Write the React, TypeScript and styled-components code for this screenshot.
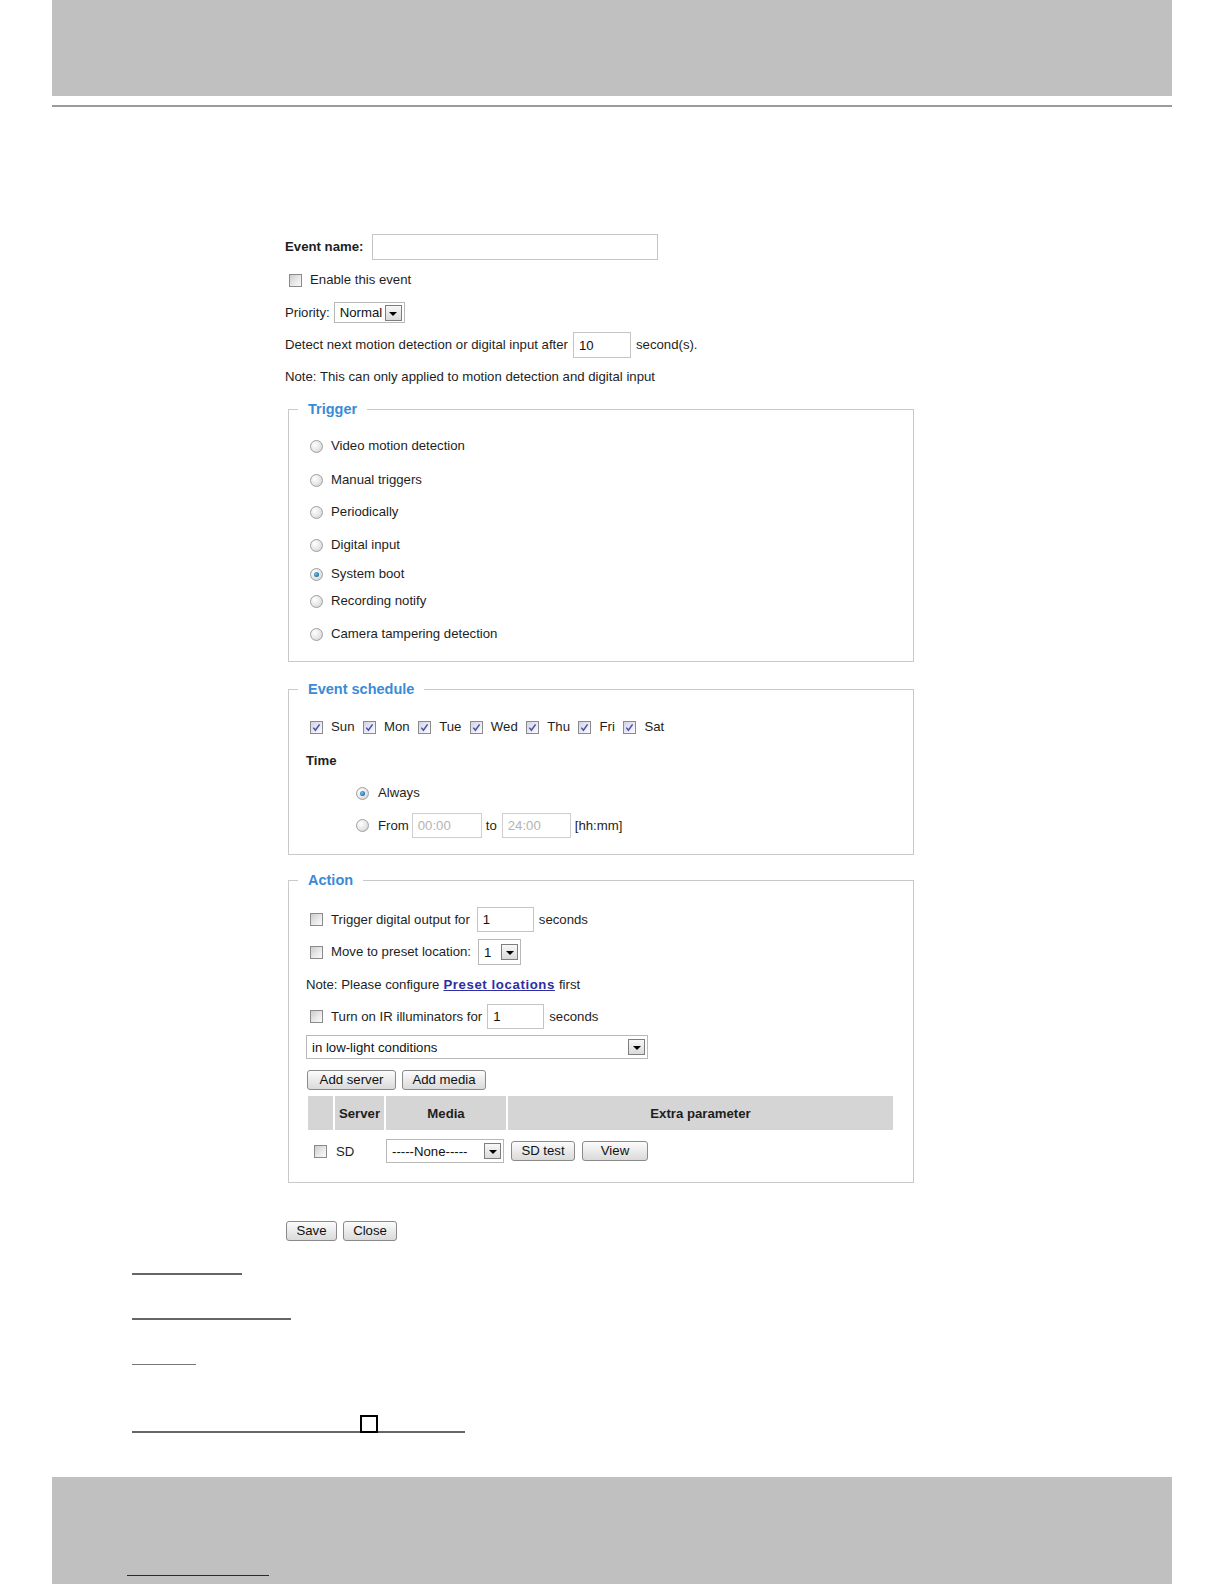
import React from "react";
import styled, { createGlobalStyle } from "styled-components";

const GlobalStyle = createGlobalStyle`
  html, body { margin: 0; padding: 0; background: #fff; }
  body {
    font-family: "Liberation Sans", Arial, sans-serif;
    font-size: 13.2px;
    color: #1e1e1e;
  }
  * { box-sizing: border-box; }
`;

const Page = styled.div`
  width: 1224px;
  height: 1584px;
  display: flex;
  flex-direction: column;
  overflow: hidden;
`;

const HeaderBand = styled.div`
  flex: none;
  margin: 0 52px;
  height: 96px;
  background: #c0c0c0;
`;

const HeaderRule = styled.div`
  flex: none;
  margin: 9px 52px 0;
  height: 2px;
  background: #9b9b9b;
`;

const Form = styled.div`
  margin: 127px 0 0 285px;
  width: 640px;
  display: flex;
  flex-direction: column;
`;

const Row = styled.div<{ $mt?: number; $h?: number; $indent?: number }>`
  display: flex;
  align-items: center;
  white-space: nowrap;
  margin-top: ${(p) => p.$mt ?? 0}px;
  height: ${(p) => p.$h ?? 20}px;
  padding-left: ${(p) => p.$indent ?? 0}px;
`;

const Text = styled.span<{ $ml?: number; $bold?: boolean }>`
  margin-left: ${(p) => p.$ml ?? 0}px;
  font-weight: ${(p) => (p.$bold ? "bold" : "normal")};
  line-height: 16px;
`;

const Link = styled.a`
  margin: 0 4px;
  color: #2e2ea3;
  font-weight: bold;
  letter-spacing: 0.6px;
  text-decoration: underline;
  cursor: pointer;
`;

const Group = styled.fieldset<{ $mt: number; $pb: number }>`
  margin: ${(p) => p.$mt}px 0 0 3px;
  width: 626px;
  min-width: 0;
  border: 1px solid #c9c9c9;
  padding: 0 18px ${(p) => p.$pb}px 17px;
  display: flex;
  flex-direction: column;
`;

const Legend = styled.legend`
  margin-left: -8px;
  padding: 0 10px;
  font-size: 14.5px;
  line-height: 18px;
  font-weight: bold;
  color: #3a8bd6;
`;

const CheckBox = styled.span<{ $ml?: number; $on?: boolean }>`
  flex: none;
  width: 13px;
  height: 13px;
  margin-left: ${(p) => p.$ml ?? 4}px;
  border: 1px solid #8a8a8a;
  background: ${(p) =>
    p.$on
      ? "linear-gradient(135deg, #d2d2e4 0%, #ececf7 60%, #fafaff 100%)"
      : "linear-gradient(135deg, #cdcdcd 0%, #ebebeb 60%, #fafafa 100%)"};
  display: inline-flex;
  align-items: center;
  justify-content: center;
`;

const RadioDot = styled.span<{ $ml?: number; $on?: boolean }>`
  flex: none;
  width: 13px;
  height: 13px;
  margin-left: ${(p) => p.$ml ?? 4}px;
  border-radius: 50%;
  border: 1px solid #a0a0a0;
  background: radial-gradient(circle at 35% 35%, #ffffff 0%, #e6e6e6 55%, #c8c8c8 100%);
  display: inline-flex;
  align-items: center;
  justify-content: center;
  &::after {
    content: "";
    display: ${(p) => (p.$on ? "block" : "none")};
    width: 5px;
    height: 5px;
    border-radius: 50%;
    background: radial-gradient(circle at 40% 40%, #7fc4ee 0%, #2a78b0 60%, #174f7c 100%);
  }
`;

const Field = styled.span<{ $w: number; $h: number; $ml?: number; $off?: boolean }>`
  flex: none;
  display: inline-flex;
  align-items: center;
  width: ${(p) => p.$w}px;
  height: ${(p) => p.$h}px;
  margin-left: ${(p) => p.$ml ?? 0}px;
  padding-left: 5px;
  border: 1px solid ${(p) => (p.$off ? "#cfcfcf" : "#c4c4c4")};
  background: #fff;
  color: ${(p) => (p.$off ? "#b4b4b4" : "#111")};
`;

const Select = styled.span<{ $w: number; $h: number; $ml?: number }>`
  flex: none;
  display: inline-flex;
  align-items: center;
  justify-content: space-between;
  width: ${(p) => p.$w}px;
  height: ${(p) => p.$h}px;
  margin-left: ${(p) => p.$ml ?? 0}px;
  padding: 0 2px 0 5px;
  border: 1px solid #b8b8b8;
  background: #fff;
  color: #111;
`;

const DropBtn = styled.span`
  flex: none;
  width: 17px;
  height: 16px;
  border: 1px solid #7e7e7e;
  background: linear-gradient(#f8f8f8, #dadada);
  display: inline-flex;
  align-items: center;
  justify-content: center;
  &::after {
    content: "";
    margin-top: 2px;
    border-left: 4px solid transparent;
    border-right: 4px solid transparent;
    border-top: 4px solid #000;
  }
`;

const Button = styled.button<{ $w: number; $ml?: number }>`
  flex: none;
  width: ${(p) => p.$w}px;
  height: 20px;
  margin: 0 0 0 ${(p) => p.$ml ?? 0}px;
  padding: 0;
  border: 1px solid #8a8a8a;
  border-radius: 3px;
  background: linear-gradient(#fcfcfc 0%, #ececec 45%, #dadada 100%);
  font-family: inherit;
  font-size: 13.2px;
  color: #111;
  line-height: 18px;
`;

const Table = styled.table`
  margin-top: 4px;
  width: 589px;
  border-collapse: separate;
  border-spacing: 2px;
`;

const Th = styled.th<{ $w: number }>`
  width: ${(p) => p.$w}px;
  height: 34px;
  padding: 0;
  background: #d5d5d5;
  font-weight: bold;
  font-size: 13.2px;
  text-align: center;
  white-space: nowrap;
`;

const Td = styled.td`
  height: 38px;
  padding: 0;
  vertical-align: middle;
  white-space: nowrap;
`;

const Cell = styled.div<{ $center?: boolean; $pl?: number }>`
  display: flex;
  align-items: center;
  justify-content: ${(p) => (p.$center ? "center" : "flex-start")};
  padding-left: ${(p) => p.$pl ?? 0}px;
`;

const Notes = styled.div`
  margin: 32px 0 0 132px;
  display: flex;
  flex-direction: column;
`;

const Rule = styled.div<{ $w: number; $t: number; $mt: number; $c?: string }>`
  width: ${(p) => p.$w}px;
  height: ${(p) => p.$t}px;
  margin-top: ${(p) => p.$mt}px;
  background: ${(p) => p.$c ?? "#666"};
`;

const BoxedRule = styled.div`
  margin-top: 50px;
  width: 333px;
  height: 18px;
  display: flex;
  align-items: flex-end;
`;

const Segment = styled.div<{ $w?: number }>`
  height: 2px;
  background: #666;
  flex: ${(p) => (p.$w ? "none" : "1")};
  width: ${(p) => (p.$w ? `${p.$w}px` : "auto")};
`;

const Square = styled.div`
  flex: none;
  width: 18px;
  height: 18px;
  border: 2px solid #000;
`;

const FooterBand = styled.div`
  flex: none;
  margin: auto 52px 0;
  height: 107px;
  background: #c0c0c0;
  padding: 98px 0 0 75px;
`;

const FooterLink = styled.div`
  width: 142px;
  height: 1px;
  background: #1414d8;
`;

const Check = () => (
  <svg width="9" height="9" viewBox="0 0 9 9">
    <path d="M1.3 4.6 L3.4 7.2 L7.6 1.4" stroke="#4a4ea6" strokeWidth="1.5" fill="none" />
  </svg>
);

const triggers: { label: string; mt: number; on?: boolean }[] = [
  { label: "Video motion detection", mt: 18 },
  { label: "Manual triggers", mt: 14 },
  { label: "Periodically", mt: 12 },
  { label: "Digital input", mt: 13 },
  { label: "System boot", mt: 9, on: true },
  { label: "Recording notify", mt: 7 },
  { label: "Camera tampering detection", mt: 13 },
];

const days = ["Sun", "Mon", "Tue", "Wed", "Thu", "Fri", "Sat"];

export default function App() {
  return (
    <Page>
      <GlobalStyle />
      <HeaderBand />
      <HeaderRule />

      <Form>
        <Row $h={26}>
          <Text $bold>Event name:</Text>
          <Field $w={286} $h={26} $ml={9} />
        </Row>
        <Row $mt={10} $h={20}>
          <CheckBox />
          <Text $ml={8}>Enable this event</Text>
        </Row>
        <Row $mt={12} $h={21}>
          <Text>Priority:</Text>
          <Select $w={71} $h={21} $ml={4}>
            Normal
            <DropBtn />
          </Select>
        </Row>
        <Row $mt={9} $h={26}>
          <Text>Detect next motion detection or digital input after</Text>
          <Field $w={58} $h={26} $ml={5}>10</Field>
          <Text $ml={5}>second(s).</Text>
        </Row>
        <Row $mt={11} $h={16}>
          <Text>Note: This can only applied to motion detection and digital input</Text>
        </Row>

        <Group $mt={15} $pb={17}>
          <Legend>Trigger</Legend>
          {triggers.map((t) => (
            <Row key={t.label} $mt={t.mt} $h={20}>
              <RadioDot $on={t.on} />
              <Text $ml={8}>{t.label}</Text>
            </Row>
          ))}
        </Group>

        <Group $mt={18} $pb={16}>
          <Legend>Event schedule</Legend>
          <Row $mt={19} $h={20}>
            {days.map((d, i) => (
              <React.Fragment key={d}>
                <CheckBox $on $ml={i === 0 ? 4 : 8.5}>
                  <Check />
                </CheckBox>
                <Text $ml={8}>{d}</Text>
              </React.Fragment>
            ))}
          </Row>
          <Row $mt={14} $h={20}>
            <Text $bold>Time</Text>
          </Row>
          <Row $mt={12} $h={20} $indent={46}>
            <RadioDot $on />
            <Text $ml={9}>Always</Text>
          </Row>
          <Row $mt={10} $h={25} $indent={46}>
            <RadioDot />
            <Text $ml={9}>From</Text>
            <Field $w={70} $h={25} $ml={3} $off>
              00:00
            </Field>
            <Text $ml={4}>to</Text>
            <Field $w={69} $h={25} $ml={5} $off>
              24:00
            </Field>
            <Text $ml={4}>[hh:mm]</Text>
          </Row>
        </Group>

        <Group $mt={16} $pb={10}>
          <Legend>Action</Legend>
          <Row $mt={18} $h={25}>
            <CheckBox />
            <Text $ml={8}>Trigger digital output for</Text>
            <Field $w={57} $h={25} $ml={7}>1</Field>
            <Text $ml={5}>seconds</Text>
          </Row>
          <Row $mt={7} $h={26}>
            <CheckBox />
            <Text $ml={8}>Move to preset location:</Text>
            <Select $w={43} $h={26} $ml={7}>
              1
              <DropBtn />
            </Select>
          </Row>
          <Row $mt={12} $h={16}>
            <Text>
              Note: Please configure<Link>Preset locations</Link>first
            </Text>
          </Row>
          <Row $mt={11} $h={25}>
            <CheckBox />
            <Text $ml={8}>Turn on IR illuminators for</Text>
            <Field $w={57} $h={25} $ml={5}>1</Field>
            <Text $ml={5}>seconds</Text>
          </Row>
          <Row $mt={6} $h={24}>
            <Select $w={342} $h={24}>
              in low-light conditions
              <DropBtn />
            </Select>
          </Row>
          <Row $mt={11} $h={20}>
            <Button $w={89} $ml={1}>Add server</Button>
            <Button $w={84} $ml={6}>Add media</Button>
          </Row>
          <Table>
            <thead>
              <tr>
                <Th $w={25} />
                <Th $w={49}>Server</Th>
                <Th $w={120}>Media</Th>
                <Th $w={385}>Extra parameter</Th>
              </tr>
            </thead>
            <tbody>
              <tr>
                <Td>
                  <Cell $center>
                    <CheckBox $ml={0} />
                  </Cell>
                </Td>
                <Td>
                  <Cell $pl={1}>SD</Cell>
                </Td>
                <Td>
                  <Cell>
                    <Select $w={118} $h={24}>
                      -----None-----
                      <DropBtn />
                    </Select>
                  </Cell>
                </Td>
                <Td>
                  <Cell>
                    <Button $w={64} $ml={3}>SD test</Button>
                    <Button $w={66} $ml={7}>View</Button>
                  </Cell>
                </Td>
              </tr>
            </tbody>
          </Table>
        </Group>

        <Row $mt={38} $h={20}>
          <Button $w={51} $ml={1}>Save</Button>
          <Button $w={54} $ml={6}>Close</Button>
        </Row>
      </Form>

      <Notes>
        <Rule $w={110} $t={2} $mt={0} />
        <Rule $w={159} $t={2} $mt={43} />
        <Rule $w={64} $t={1} $mt={44} $c="#777" />
        <BoxedRule>
          <Segment $w={228} />
          <Square />
          <Segment />
        </BoxedRule>
      </Notes>

      <FooterBand>
        <FooterLink />
      </FooterBand>
    </Page>
  );
}
